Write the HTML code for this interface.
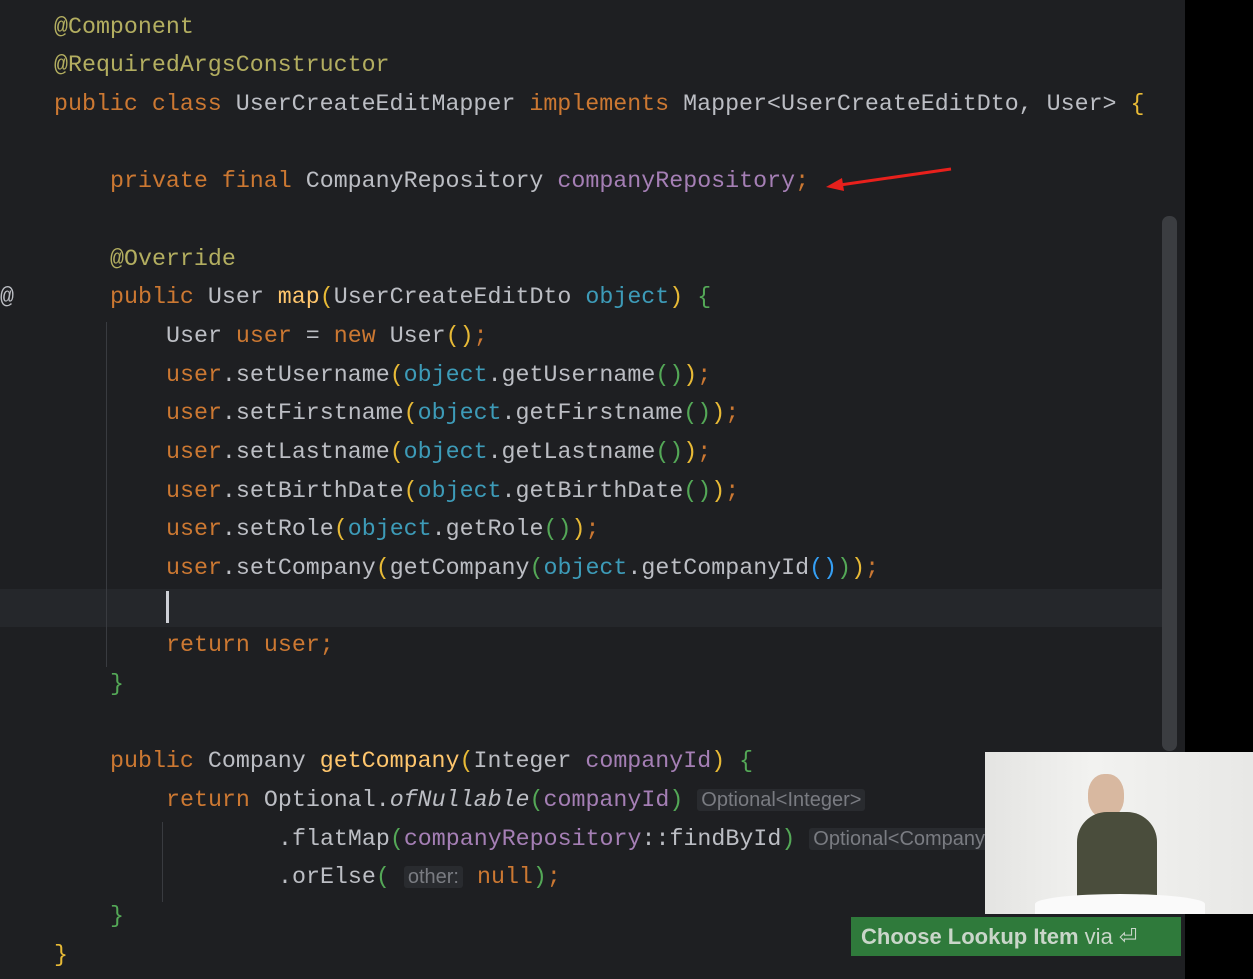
<!DOCTYPE html>
<html><head><meta charset="utf-8"><style>
body{margin:0;width:1253px;height:979px;background:#1e1f22;overflow:hidden;position:relative;font-family:"Liberation Mono",monospace;}
.l{position:absolute;left:54px;height:38.67px;line-height:38.67px;font-size:23.3px;white-space:pre;color:#bcbec4;}
.k{color:#cc7832}.a{color:#b3ae60}.f{color:#a57fb5}.m{color:#ffc66d}.p{color:#3d9bb8}.v{color:#cc7832}
.y{color:#e8ba36}.g{color:#54a857}.b{color:#359ff4}.i{font-style:italic}
.h{font-family:"Liberation Sans",sans-serif;font-size:20px;color:#7a7c82;background:#292b2f;padding:0 4px;border-radius:3px}
</style></head><body>
<div style="position:absolute;left:0;top:589px;width:1163px;height:38px;background:#25272b"></div>
<div style="position:absolute;left:1185px;top:0;width:68px;height:979px;background:#000"></div>
<div style="position:absolute;left:1162px;top:216px;width:15px;height:535px;background:#3b3d41;border-radius:7px"></div>
<div style="position:absolute;left:106px;top:322px;width:1px;height:345px;background:#393b40"></div>
<div style="position:absolute;left:162px;top:822px;width:1px;height:80px;background:#393b40"></div>
<div style="position:absolute;left:166px;top:591px;width:3px;height:32px;background:#ced0d6"></div>
<div class="l" style="left:0;top:278px;color:#bcbec4">@</div>
<div class="l a" style="top:7.7px">@Component</div>
<div class="l a" style="top:46.4px">@RequiredArgsConstructor</div>
<div class="l" style="top:85px"><span class="k">public class </span>UserCreateEditMapper <span class="k">implements </span>Mapper&lt;UserCreateEditDto, User&gt; <span class="y">{</span></div>
<div class="l" style="top:162.4px;left:110px"><span class="k">private final </span>CompanyRepository <span class="f">companyRepository</span><span class="k">;</span></div>
<div class="l a" style="top:239.7px;left:110px">@Override</div>
<div class="l" style="top:278.4px;left:110px"><span class="k">public </span>User <span class="m">map</span><span class="y">(</span>UserCreateEditDto <span class="p">object</span><span class="y">)</span> <span class="g">{</span></div>
<div class="l" style="top:317px;left:166px">User <span class="v">user</span> = <span class="k">new </span>User<span class="y">()</span><span class="k">;</span></div>
<div class="l" style="top:355.7px;left:166px"><span class="v">user</span>.setUsername<span class="y">(</span><span class="p">object</span>.getUsername<span class="g">()</span><span class="y">)</span><span class="k">;</span></div>
<div class="l" style="top:394.4px;left:166px"><span class="v">user</span>.setFirstname<span class="y">(</span><span class="p">object</span>.getFirstname<span class="g">()</span><span class="y">)</span><span class="k">;</span></div>
<div class="l" style="top:433px;left:166px"><span class="v">user</span>.setLastname<span class="y">(</span><span class="p">object</span>.getLastname<span class="g">()</span><span class="y">)</span><span class="k">;</span></div>
<div class="l" style="top:471.7px;left:166px"><span class="v">user</span>.setBirthDate<span class="y">(</span><span class="p">object</span>.getBirthDate<span class="g">()</span><span class="y">)</span><span class="k">;</span></div>
<div class="l" style="top:510.4px;left:166px"><span class="v">user</span>.setRole<span class="y">(</span><span class="p">object</span>.getRole<span class="g">()</span><span class="y">)</span><span class="k">;</span></div>
<div class="l" style="top:549px;left:166px"><span class="v">user</span>.setCompany<span class="y">(</span>getCompany<span class="g">(</span><span class="p">object</span>.getCompanyId<span class="b">()</span><span class="g">)</span><span class="y">)</span><span class="k">;</span></div>
<div class="l" style="top:626.4px;left:166px"><span class="k">return </span><span class="v">user</span><span class="k">;</span></div>
<div class="l g" style="top:665px;left:110px">}</div>
<div class="l" style="top:742.4px;left:110px"><span class="k">public </span>Company <span class="m">getCompany</span><span class="y">(</span>Integer <span class="f">companyId</span><span class="y">)</span> <span class="g">{</span></div>
<div class="l" style="top:781px;left:166px"><span class="k">return </span>Optional.<span class="i">ofNullable</span><span class="g">(</span><span class="f">companyId</span><span class="g">)</span> <span class="h">Optional&lt;Integer&gt;</span></div>
<div class="l" style="top:819.7px;left:278px">.flatMap<span class="g">(</span><span class="f">companyRepository</span>::findById<span class="g">)</span> <span class="h">Optional&lt;Company&gt;</span></div>
<div class="l" style="top:858.4px;left:278px">.orElse<span class="g">(</span> <span class="h">other:</span> <span class="k">null</span><span class="g">)</span><span class="k">;</span></div>
<div class="l g" style="top:897px;left:110px">}</div>
<div class="l y" style="top:935.7px">}</div>
<svg style="position:absolute;left:0;top:0" width="1253" height="979"><line x1="951" y1="169" x2="840" y2="185" stroke="#e8201c" stroke-width="3"/><polygon points="826,187 842,178 844,191" fill="#e8201c"/></svg>
<div style="position:absolute;left:985px;top:752px;width:268px;height:162px;background:linear-gradient(90deg,#e4e4e2,#f2f2f0 40%,#e8e8e6)">
<div style="position:absolute;left:103px;top:22px;width:36px;height:44px;border-radius:45%;background:#d8b8a0"></div>
<div style="position:absolute;left:92px;top:60px;width:80px;height:92px;border-radius:30px 30px 6px 6px;background:#4a4d3c"></div>
<div style="position:absolute;left:50px;top:142px;width:170px;height:20px;border-radius:50% 50% 0 0;background:#fafafa"></div>
</div>
<div style="position:absolute;left:851px;top:917px;width:330px;height:39px;background:#2f7a3b;font-family:'Liberation Sans',sans-serif;font-size:22px;line-height:39px;color:#c9d6c9;padding-left:10px;box-sizing:border-box;white-space:nowrap"><b>Choose Lookup Item</b> via ⏎</div>
</body></html>
